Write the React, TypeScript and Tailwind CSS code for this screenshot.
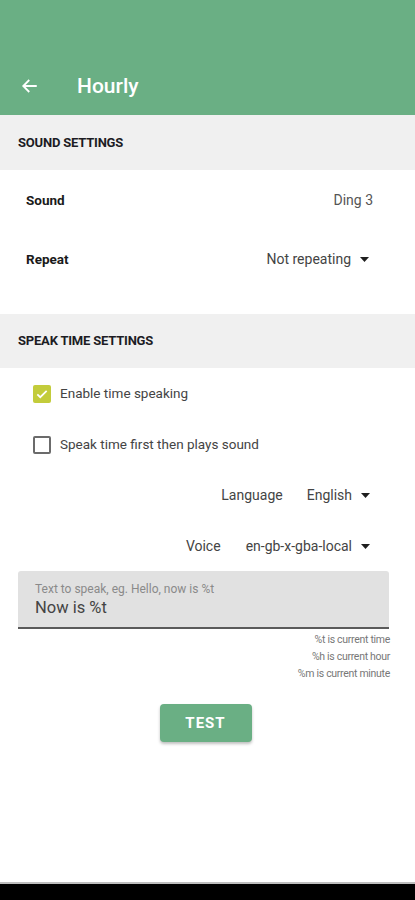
import React, { useState } from 'react';

const Caret = () => (
  <svg width="9" height="5" viewBox="0 0 9 5" className="ml-[9px] inline-block">
    <path d="M0 0h9L4.5 5z" fill="#1f1f1f" />
  </svg>
);

const Check = ({ on }: { on: boolean }) =>
  on ? (
    <span className="w-[18px] h-[18px] rounded-[2px] bg-[#c3cc3b] flex items-center justify-center">
      <svg width="14" height="14" viewBox="0 0 24 24" fill="none" stroke="white" strokeWidth={3}>
        <path d="M4 12.5l5 5L20 6.5" />
      </svg>
    </span>
  ) : (
    <span className="w-[18px] h-[18px] rounded-[2px] border-2 border-[#6b6b6b]" />
  );

export default function App() {
  const [speak, setSpeak] = useState(true);
  const [first, setFirst] = useState(false);

  return (
    <div className="w-[415px] h-[900px] bg-white flex flex-col font-['Roboto',sans-serif] text-[#222]">
      {/* App bar */}
      <div className="h-[115px] bg-[#6aaf84] flex items-end pb-[16px]">
        <svg width="18" height="18" viewBox="0 0 24 24" fill="none" stroke="white" strokeWidth={2.4} className="ml-[21px] mb-[4px]">
          <path d="M21 12H4M11 4l-8 8 8 8" />
        </svg>
        <span className="ml-[38px] text-[21px] font-medium text-white leading-[26px]">Hourly</span>
      </div>

      {/* Sound settings */}
      <div className="h-[55px] bg-[#f0f0f0] flex items-center px-[18px] text-[13px] font-bold tracking-[-0.2px] text-[#1c1c24]">
        SOUND SETTINGS
      </div>
      <div className="flex flex-col pl-[26px] pr-[42px] text-[13.5px]">
        <div className="h-[60px] flex items-center justify-between pt-[1px]">
          <span className="font-bold text-[#1a1a1a]">Sound</span>
          <span className="text-[14px] text-[#555]">Ding 3</span>
        </div>
        <div className="h-[58px] flex items-center justify-between">
          <span className="font-bold text-[#1a1a1a]">Repeat</span>
          <span className="flex items-center text-[14px] text-[#444] mr-[4px]">Not repeating<Caret /></span>
        </div>
      </div>
      <div className="h-[26px]" />

      {/* Speak time settings */}
      <div className="h-[54px] bg-[#f0f0f0] flex items-center px-[18px] text-[13px] font-bold tracking-[-0.2px] text-[#1c1c24]">
        SPEAK TIME SETTINGS
      </div>
      <div className="flex flex-col pl-[33px] text-[13.5px] text-[#444]">
        <button onClick={() => setSpeak(!speak)} className="h-[51px] flex items-center gap-[9px]">
          <Check on={speak} />
          <span>Enable time speaking</span>
        </button>
        <button onClick={() => setFirst(!first)} className="h-[51px] flex items-center gap-[9px]">
          <Check on={first} />
          <span>Speak time first then plays sound</span>
        </button>
      </div>
      <div className="flex flex-col items-end pr-[45px] text-[14px] text-[#444]">
        <div className="h-[51px] flex items-center">
          <span className="mr-[24px]">Language</span>
          <span className="flex items-center">English<Caret /></span>
        </div>
        <div className="h-[51px] flex items-center">
          <span className="mr-[25px]">Voice</span>
          <span className="flex items-center">en-gb-x-gba-local<Caret /></span>
        </div>
      </div>

      {/* Text field */}
      <div className="mx-[18px] mt-[-1px] w-[371px] h-[58px] bg-[#e1e1e1] rounded-t-[3px] border-b-2 border-[#5a5a5a] px-[17px] pt-[10px] flex flex-col">
        <span className="text-[12px] leading-[16px] text-[#8a8a8a]">Text to speak, eg. Hello, now is %t</span>
        <span className="text-[16.5px] leading-[22px] text-[#444]">Now is %t</span>
      </div>
      <div className="flex flex-col items-end pr-[25px] pt-[2px] text-[10.5px] leading-[17px] text-[#777] tracking-[-0.3px]">
        <span>%t is current time</span>
        <span>%h is current hour</span>
        <span>%m is current minute</span>
      </div>
      <div className="flex justify-center pt-[22px] pr-[4px]">
        <button className="w-[92px] h-[38px] rounded-[4px] bg-[#6aaf84] text-white text-[15px] font-bold tracking-[1px] shadow-[0_2px_3px_rgba(0,0,0,0.25)]">
          TEST
        </button>
      </div>

      <div className="flex-1" />
      <div className="h-[2px] bg-[#bdbdbd]" />
      <div className="h-[16px] bg-black" />
    </div>
  );
}
